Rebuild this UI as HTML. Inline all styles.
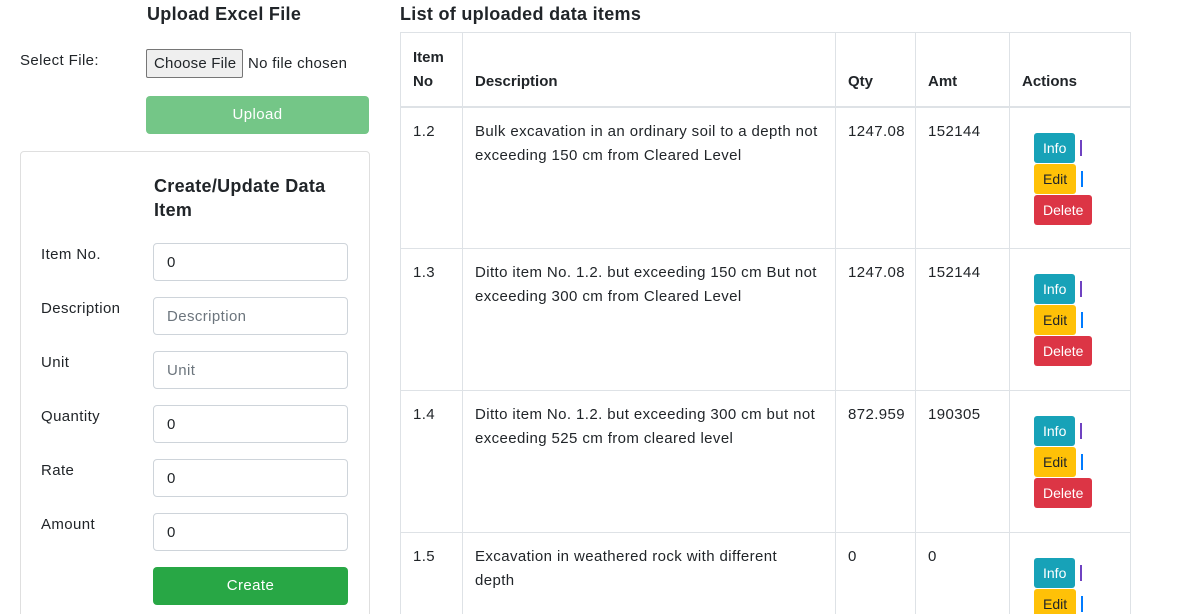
<!DOCTYPE html><html><head><style>
*{box-sizing:border-box}html,body{margin:0;width:1190px;height:614px;overflow:hidden}body{background:#fff;font-family:"Liberation Sans",sans-serif;color:#212529;font-size:15px;position:relative;letter-spacing:0.4px}
.a{position:absolute;white-space:nowrap}
h{position:absolute;font-weight:bold;font-size:18px;color:#212529;letter-spacing:0.3px}
.inp{position:absolute;left:153px;width:195px;height:38px;border:1px solid #ced4da;border-radius:4px;padding:10px 13px;font-size:15px}
.lbl{position:absolute;left:41px}
table{position:absolute;left:400px;top:32px;width:730px;border-collapse:collapse;font-size:15px;table-layout:fixed}
td,th{border:1px solid #dee2e6;vertical-align:top;text-align:left;padding:12px;line-height:24px;white-space:nowrap}
th{vertical-align:bottom;border-bottom:2px solid #dee2e6;height:74px;letter-spacing:0}
tr.r td{height:142px}
.b{display:block;color:#fff;font-size:14px;border-radius:3px;height:30px;line-height:30px;padding:0 9px;width:max-content;margin-bottom:1px;letter-spacing:0}
.p{display:inline-block;vertical-align:top;margin-left:5px;margin-top:7px;width:2px;height:16px}
</style></head><body>
<h style="left:147px;top:4px">Upload Excel File</h>
<h style="left:400px;top:4px">List of uploaded data items</h>
<div class="a" style="left:20px;top:52px">Select File:</div>
<div class="a" style="left:146px;top:49px;width:97px;height:29px;border:1px solid #767676;border-radius:2px;background:#efefef;padding:5px 7px;font-size:15px;letter-spacing:0.2px">Choose File</div>
<div class="a" style="left:248px;top:55px;font-size:15px;letter-spacing:0.3px">No file chosen</div>
<div class="a" style="left:146px;top:96px;width:223px;height:38px;background:#74c687;border-radius:4px;color:#fff;text-align:center;line-height:38px">Upload</div>
<div class="a" style="left:20px;top:151px;width:350px;height:470px;border:1px solid #dfdfdf;border-radius:4px"></div>
<h style="left:154px;top:174px;line-height:24px">Create/Update Data<br>Item</h>
<div class="lbl" style="top:246px">Item No.</div><div class="inp" style="top:243px">0</div>
<div class="lbl" style="top:300px">Description</div><div class="inp" style="top:297px;color:#6c757d">Description</div>
<div class="lbl" style="top:354px">Unit</div><div class="inp" style="top:351px;color:#6c757d">Unit</div>
<div class="lbl" style="top:408px">Quantity</div><div class="inp" style="top:405px">0</div>
<div class="lbl" style="top:462px">Rate</div><div class="inp" style="top:459px">0</div>
<div class="lbl" style="top:516px">Amount</div><div class="inp" style="top:513px">0</div>
<div class="a" style="left:153px;top:567px;width:195px;height:38px;background:#28a745;border-radius:4px;color:#fff;text-align:center;line-height:38px">Create</div>
<table>
<colgroup><col style="width:62px"><col style="width:373px"><col style="width:80px"><col style="width:94px"><col style="width:121px"></colgroup>
<tr><th>Item<br>No</th><th>Description</th><th>Qty</th><th>Amt</th><th>Actions</th></tr>
<tr class="r"><td>1.2</td><td>Bulk excavation in an ordinary soil to a depth not<br>exceeding 150 cm from Cleared Level</td><td>1247.08</td><td>152144</td><td style="padding:25px 0 0 24px"><A/></td></tr>
<tr class="r"><td>1.3</td><td>Ditto item No. 1.2. but exceeding 150 cm But not<br>exceeding 300 cm from Cleared Level</td><td>1247.08</td><td>152144</td><td style="padding:25px 0 0 24px"><A/></td></tr>
<tr class="r"><td>1.4</td><td>Ditto item No. 1.2. but exceeding 300 cm but not<br>exceeding 525 cm from cleared level</td><td>872.959</td><td>190305</td><td style="padding:25px 0 0 24px"><A/></td></tr>
<tr class="r"><td>1.5</td><td>Excavation in weathered rock with different<br>depth</td><td>0</td><td>0</td><td style="padding:25px 0 0 24px"><A/></td></tr>
</table>
<script>
document.querySelectorAll('A').forEach(e=>{e.outerHTML='<div><span class="b" style="background:#17a2b8;display:inline-block">Info</span><span class="p" style="background:#6f42c1"></span></div><div><span class="b" style="background:#ffc107;color:#212529;display:inline-block">Edit</span><span class="p" style="background:#007bff"></span></div><span class="b" style="background:#dc3545">Delete</span>'});
</script>
</body></html>
